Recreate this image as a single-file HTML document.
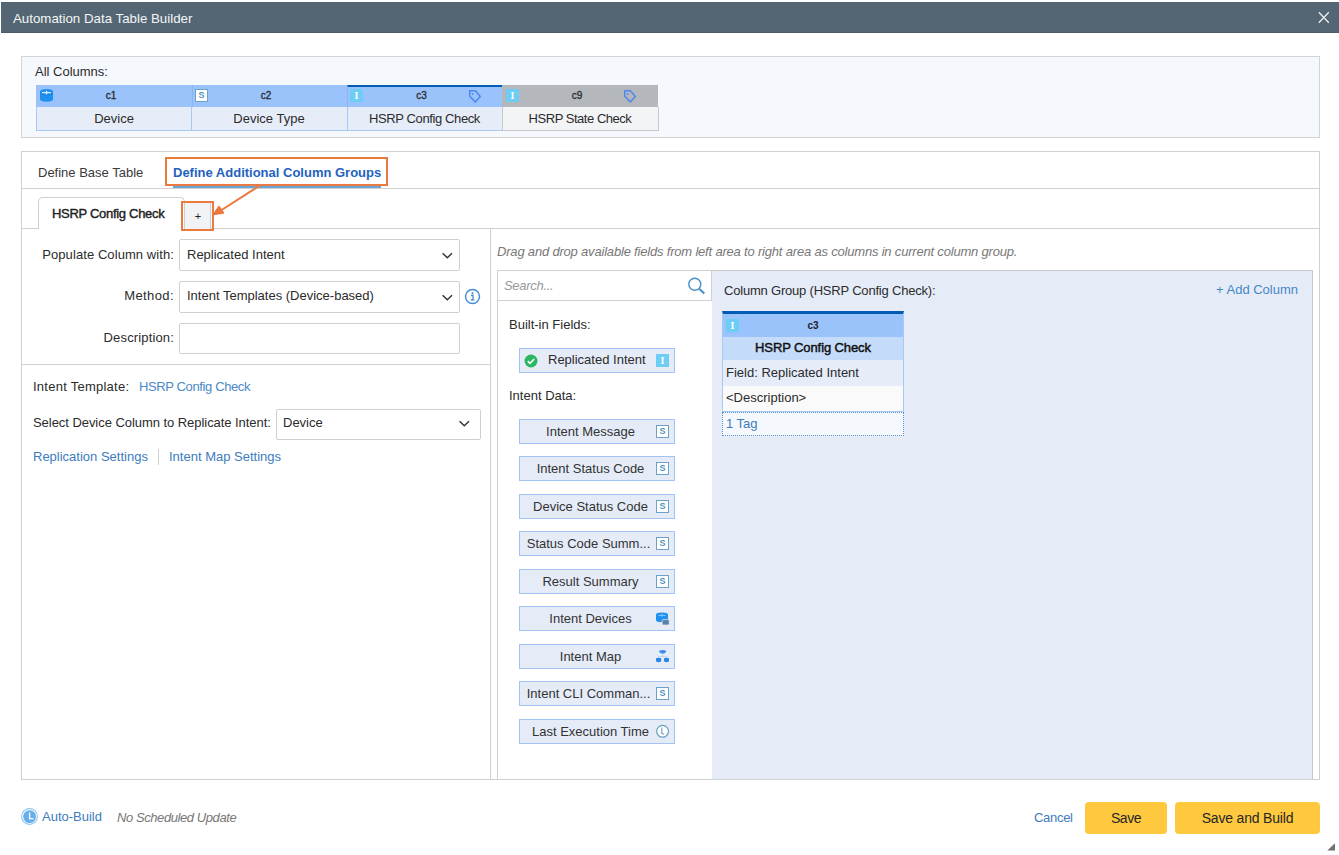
<!DOCTYPE html>
<html><head><meta charset="utf-8">
<style>
*{box-sizing:border-box;margin:0;padding:0}
html,body{width:1339px;height:855px;overflow:hidden;background:#fff}
body{position:relative;font-family:"Liberation Sans",sans-serif;font-size:13px;color:#2b2b2b}
.a{position:absolute}
.t{position:absolute;white-space:nowrap;line-height:15px}
.lnk{color:#3d7cbd}
.chip{position:absolute;left:519px;width:156px;height:25px;background:#e5ecf8;border:1px solid #a3c4f3}
.chip .tx{position:absolute;left:-1px;top:4px;width:143px;text-align:center;white-space:nowrap;line-height:15px;color:#333}
.sic{position:absolute;width:13px;height:13px;border:1px solid #6aa2c9;background:#fff;color:#5692bd;font-size:9px;font-weight:bold;line-height:11px;text-align:center}
.iic{position:absolute;width:13px;height:13px;background:#6dcdf5;color:#fff;font-family:"Liberation Serif",serif;font-size:10px;font-weight:bold;line-height:13px;text-align:center}
</style></head><body>

<!-- header -->
<div class="a" style="left:1px;top:2px;width:1338px;height:31px;background:#546673;border-bottom:1px solid #4b5b67"></div>
<div class="t" style="left:13px;top:11px;color:#f4f6f7;font-size:13.3px">Automation Data Table Builder</div>
<svg class="a" style="left:1317px;top:11px" width="14" height="14" viewBox="0 0 14 14"><path d="M1.8 1.2L11.8 11.8M11.8 1.2L1.8 11.8" stroke="#eef1f3" stroke-width="1.25"/></svg>

<!-- all columns panel -->
<div class="a" style="left:21px;top:56px;width:1299px;height:82px;background:#f5f8fc;border:1px solid #d4d4d4"></div>
<div class="t" style="left:35px;top:64px">All Columns:</div>


<!-- column table -->
<div class="a" style="left:36px;top:85px;width:156px;height:22px;background:#9ac2fb"></div>
<div class="a" style="left:192px;top:85px;width:155px;height:22px;background:#9ac2fb;border-left:1px solid #8cb6f0"></div>
<div class="a" style="left:347px;top:85px;width:155px;height:22px;background:#9ac2fb;border-left:1px solid #8cb6f0;border-top:2px solid #005bb5"></div>
<div class="a" style="left:502px;top:85px;width:156px;height:22px;background:#b4b8bc"></div>
<div class="a" style="left:36px;top:107px;width:467px;height:24px;background:#e6edf9;border:1px solid #a8c9f5;border-top:none"></div>
<div class="a" style="left:191px;top:107px;width:1px;height:23px;background:#a8c9f5"></div>
<div class="a" style="left:347px;top:107px;width:1px;height:23px;background:#a8c9f5"></div>
<div class="a" style="left:502px;top:107px;width:157px;height:24px;background:#f3f4f6;border:1px solid #c6c8ca;border-top:none"></div>
<div class="t" style="left:33px;top:88px;width:156px;text-align:center;font-size:10px;color:#2a2a2a;-webkit-text-stroke:0.3px #2a2a2a">c1</div>
<div class="t" style="left:188px;top:88px;width:156px;text-align:center;font-size:10px;color:#2a2a2a;-webkit-text-stroke:0.3px #2a2a2a">c2</div>
<div class="t" style="left:344px;top:88px;width:155px;text-align:center;font-size:10px;color:#2a2a2a;-webkit-text-stroke:0.3px #2a2a2a">c3</div>
<div class="t" style="left:499px;top:88px;width:156px;text-align:center;font-size:10px;color:#2a2a2a;-webkit-text-stroke:0.3px #2a2a2a">c9</div>
<div class="t" style="left:36px;top:111px;width:156px;text-align:center">Device</div>
<div class="t" style="left:191px;top:111px;width:156px;text-align:center">Device Type</div>
<div class="t" style="left:347px;top:111px;width:155px;text-align:center;letter-spacing:-0.39px">HSRP Config Check</div>
<div class="t" style="left:502px;top:111px;width:156px;text-align:center;letter-spacing:-0.47px">HSRP State Check</div>
<!-- icons -->
<svg class="a" style="left:39px;top:88px" width="15" height="15" viewBox="0 0 15 15"><path d="M1 3.5Q1 1 7.5 1Q14 1 14 3.5V11Q14 13.8 7.5 13.8Q1 13.8 1 11Z" fill="#1f8ff0"/><path d="M1.3 5.8Q7.5 8.3 13.7 5.8" fill="none" stroke="#1a7fd8" stroke-width="0.8"/><path d="M3 4.6H12M7.5 2.8V6.5" stroke="#d8ecfc" stroke-width="1.3"/></svg>
<div class="sic" style="left:195px;top:89px">S</div>
<div class="iic" style="left:350px;top:89px">I</div>
<div class="iic" style="left:506px;top:89px">I</div>
<svg class="a" style="left:468px;top:89px" width="14" height="14" viewBox="0 0 14 14"><path d="M1.7 1.7H7.3L12.3 7.5L7.3 12.9L1.7 7.3Z" fill="none" stroke="#4f86f0" stroke-width="1.5" stroke-linejoin="round"/><circle cx="4.6" cy="5" r="0.9" fill="#4f86f0"/></svg>
<svg class="a" style="left:623px;top:89px" width="14" height="14" viewBox="0 0 14 14"><path d="M1.7 1.7H7.3L12.3 7.5L7.3 12.9L1.7 7.3Z" fill="none" stroke="#4f86f0" stroke-width="1.5" stroke-linejoin="round"/><circle cx="4.6" cy="5" r="0.9" fill="#4f86f0"/></svg>


<!-- main panel -->
<div class="a" style="left:21px;top:151px;width:1299px;height:629px;border:1px solid #d0d0d0"></div>
<div class="a" style="left:21px;top:188px;width:1299px;height:1px;background:#d0d0d0"></div>
<div class="t" style="left:38px;top:165px;color:#3a3a3a">Define Base Table</div>
<div class="t" style="left:173px;top:165px;color:#1f62bf;font-weight:bold">Define Additional Column Groups</div>


<div class="a" style="left:173px;top:186px;width:208px;height:2px;background:#66a6da"></div>
<div class="a" style="left:165px;top:157px;width:223px;height:29px;border:2px solid #ea7a3f"></div>

<!-- inner tabs -->
<div class="a" style="left:21px;top:228px;width:1299px;height:1px;background:#d0d0d0"></div>
<div class="a" style="left:38px;top:197px;width:147px;height:32px;background:#fff;border:1px solid #cfcfcf;border-bottom:none;border-radius:5px 5px 0 0"></div>
<div class="t" style="left:52px;top:206px;color:#222;-webkit-text-stroke:0.4px #222;letter-spacing:-0.3px">HSRP Config Check</div>
<div class="a" style="left:184px;top:201px;width:27px;height:28px;background:#f2f3f4;border:1px solid #cfcfcf;border-bottom:none"></div>
<div class="t" style="left:184px;top:209px;width:28px;text-align:center;font-size:11px;color:#222">+</div>
<div class="a" style="left:181px;top:201px;width:33px;height:30px;border:2px solid #ea7a3f"></div>
<svg class="a" style="left:200px;top:180px" width="70" height="45" viewBox="0 0 70 45"><path d="M61.5 4.5L20 31" stroke="#ea7a3f" stroke-width="2"/><path d="M13.5 34.5L19 26.5L23.5 33z" fill="#ea7a3f" stroke="#ea7a3f" stroke-width="1.5" stroke-linejoin="round"/></svg>

<!-- left form pane -->
<div class="a" style="left:490px;top:228px;width:1px;height:551px;background:#d0d0d0"></div>
<div class="a" style="left:21px;top:364px;width:470px;height:1px;background:#d0d0d0"></div>
<div class="t" style="left:21px;top:247px;width:153px;text-align:right;letter-spacing:0.08px">Populate Column with:</div>
<div class="t" style="left:21px;top:288px;width:153px;text-align:right;letter-spacing:0.4px">Method:</div>
<div class="t" style="left:21px;top:330px;width:153px;text-align:right;letter-spacing:0.15px">Description:</div>
<div class="a" style="left:179px;top:239px;width:281px;height:32px;border:1px solid #cfcfcf;background:#fff;border-radius:2px"></div>
<div class="a" style="left:179px;top:281px;width:281px;height:32px;border:1px solid #cfcfcf;background:#fff;border-radius:2px"></div>
<div class="a" style="left:179px;top:323px;width:281px;height:31px;border:1px solid #cfcfcf;background:#fff;border-radius:2px"></div>
<div class="t" style="left:187px;top:247px">Replicated Intent</div>
<div class="t" style="left:187px;top:288px">Intent Templates (Device-based)</div>
<svg class="a" style="left:441px;top:251px" width="13" height="9" viewBox="0 0 13 9"><path d="M1.6 2.2L6.3 6.8L11 2.2" fill="none" stroke="#333" stroke-width="1.45"/></svg>
<svg class="a" style="left:441px;top:293px" width="13" height="9" viewBox="0 0 13 9"><path d="M1.6 2.2L6.3 6.8L11 2.2" fill="none" stroke="#333" stroke-width="1.45"/></svg>
<svg class="a" style="left:464px;top:288px" width="17" height="17" viewBox="0 0 17 17"><circle cx="8.5" cy="8.5" r="7" fill="none" stroke="#3d8ad6" stroke-width="1.4"/><circle cx="8.5" cy="5.2" r="1" fill="#3d8ad6"/><path d="M7 7.3h2v4.5M6.6 11.8h3.8" fill="none" stroke="#3d8ad6" stroke-width="1.3"/></svg>

<div class="t" style="left:33px;top:379px;letter-spacing:0.25px">Intent Template:</div>
<div class="t lnk" style="left:139px;top:379px;letter-spacing:-0.38px;color:#4a88c6">HSRP Config Check</div>
<div class="t" style="left:33px;top:415px;letter-spacing:-0.05px">Select Device Column to Replicate Intent:</div>
<div class="a" style="left:276px;top:409px;width:205px;height:31px;border:1px solid #cfcfcf;background:#fff;border-radius:2px"></div>
<div class="t" style="left:283px;top:415px">Device</div>
<svg class="a" style="left:458px;top:419px" width="13" height="9" viewBox="0 0 13 9"><path d="M1.6 2.2L6.3 6.8L11 2.2" fill="none" stroke="#333" stroke-width="1.45"/></svg>
<div class="t lnk" style="left:33px;top:449px">Replication Settings</div>
<div class="a" style="left:158px;top:449px;width:1px;height:16px;background:#d0d0d0"></div>
<div class="t lnk" style="left:169px;top:449px">Intent Map Settings</div>

<!-- right area -->
<div class="t" style="left:497px;top:244px;font-style:italic;color:#777;letter-spacing:-0.19px">Drag and drop available fields from left area to right area as columns in current column group.</div>
<div class="a" style="left:497px;top:270px;width:1px;height:509px;background:#d0d0d0"></div>
<div class="a" style="left:497px;top:270px;width:215px;height:31px;border-top:1px solid #d0d0d0;border-bottom:1px solid #d0d0d0;border-right:1px solid #d0d0d0"></div>
<div class="t" style="left:504px;top:278px;font-style:italic;color:#999;letter-spacing:-0.3px">Search...</div>
<svg class="a" style="left:687px;top:276px" width="19" height="19" viewBox="0 0 19 19"><circle cx="7.8" cy="8.3" r="6" fill="none" stroke="#4a90c8" stroke-width="1.4"/><path d="M12.2 12.7L17.3 17.6" stroke="#4a90c8" stroke-width="2.1"/></svg>
<div class="t" style="left:509px;top:317px">Built-in Fields:</div>
<div class="t" style="left:509px;top:388px">Intent Data:</div>

<div class="a" style="left:712px;top:270px;width:601px;height:509px;background:#e5ecf8;border-top:1px solid #c8c8c8;border-right:1px solid #c8c8c8"></div>
<div class="t" style="left:724px;top:283px;letter-spacing:-0.2px">Column Group (HSRP Config Check):</div>
<div class="t lnk" style="left:1216px;top:282px;color:#4787c6">+ Add Column</div>

<div class="chip" style="top:348px"></div>
<svg class="a" style="left:524px;top:354px" width="14" height="14" viewBox="0 0 14 14"><circle cx="7" cy="7" r="6.5" fill="#2cb562"/><path d="M3.8 7.2L6 9.3L10.2 5" fill="none" stroke="#fff" stroke-width="1.6"/></svg>
<div class="t" style="left:548px;top:352px">Replicated Intent</div>
<div class="iic" style="left:656px;top:354px">I</div>
<div class="chip" style="top:419px"><div class="tx">Intent Message</div></div>
<div class="sic" style="left:656px;top:425px">S</div>
<div class="chip" style="top:456px"><div class="tx">Intent Status Code</div></div>
<div class="sic" style="left:656px;top:462px">S</div>
<div class="chip" style="top:494px"><div class="tx">Device Status Code</div></div>
<div class="sic" style="left:656px;top:500px">S</div>
<div class="chip" style="top:531px"><div class="tx" style="left:-3px">Status Code Summ...</div></div>
<div class="sic" style="left:656px;top:537px">S</div>
<div class="chip" style="top:569px"><div class="tx">Result Summary</div></div>
<div class="sic" style="left:656px;top:575px">S</div>
<div class="chip" style="top:606px"><div class="tx">Intent Devices</div></div>
<svg class="a" style="left:655px;top:611px" width="15" height="15" viewBox="0 0 15 15"><path d="M1 3.6Q1 1.6 7 1.6Q13 1.6 13 3.6V9Q13 11.2 7 11.2Q1 11.2 1 9Z" fill="#1f8ff0"/><path d="M3.5 4.4H10.5M7 3V5.8" stroke="#8cc8f6" stroke-width="1"/><rect x="7.2" y="8.6" width="7" height="5.4" rx="1" fill="#5a7fa8" stroke="#e5ecf8" stroke-width="0.7"/></svg>
<div class="chip" style="top:644px"><div class="tx">Intent Map</div></div>
<svg class="a" style="left:655px;top:649px" width="15" height="15" viewBox="0 0 15 15"><path d="M7.6 5V7.5M3.6 9V7.5H11.6V9" fill="none" stroke="#b5d0f0" stroke-width="0.8"/><path d="M4.3 1.8Q7.65 0.3 11 1.8V3.3Q7.65 6 4.3 3.3Z" fill="#3d8fe8"/><path d="M1 9.2Q3.6 8.4 6.2 9.2V12.3Q3.6 14.3 1 12.3Z" fill="#2a86e8"/><path d="M9 9.2Q11.5 8.4 14 9.2V12.3Q11.5 14.3 9 12.3Z" fill="#2a86e8"/></svg>
<div class="chip" style="top:681px"><div class="tx" style="left:-3px">Intent CLI Comman...</div></div>
<div class="sic" style="left:656px;top:687px">S</div>
<div class="chip" style="top:719px"><div class="tx">Last Execution Time</div></div>
<svg class="a" style="left:655px;top:724px" width="15" height="15" viewBox="0 0 15 15"><circle cx="7.6" cy="7.3" r="5.9" fill="#fff" stroke="#6a9ec6" stroke-width="1.2"/><path d="M6.8 3.6V9.3L9 10.3" fill="none" stroke="#6a9ec6" stroke-width="1.1"/></svg>

<div class="a" style="left:722px;top:311px;width:182px;height:101px;border:1px solid #a8c9f5;border-top:3px solid #005bb5;background:#fafafa"></div>
<div class="a" style="left:723px;top:314px;width:180px;height:23px;background:#9ac2fb"></div>
<div class="a" style="left:723px;top:337px;width:180px;height:23px;background:#c5dbfa"></div>
<div class="a" style="left:723px;top:360px;width:180px;height:26px;background:#e6edf9"></div>
<div class="iic" style="left:726px;top:319px">I</div>
<div class="t" style="left:722px;top:318px;width:182px;text-align:center;font-size:10px;font-weight:bold;color:#222">c3</div>
<div class="t" style="left:722px;top:340px;width:182px;text-align:center;color:#111;-webkit-text-stroke:0.45px #111;letter-spacing:-0.1px">HSRP Config Check</div>
<div class="t" style="left:726px;top:365px">Field: Replicated Intent</div>
<div class="t" style="left:726px;top:390px">&lt;Description&gt;</div>
<div class="a" style="left:722px;top:412px;width:182px;height:24px;border:1px dotted #5b8fd0;background:#f5f9fe"></div>
<div class="t lnk" style="left:726px;top:416px">1 Tag</div>


<!-- footer -->
<svg class="a" style="left:21px;top:808px" width="18" height="18" viewBox="0 0 18 18"><circle cx="8.5" cy="8.5" r="7.9" fill="none" stroke="#92c6f0" stroke-width="1.1"/><circle cx="8.6" cy="8.6" r="6.4" fill="#68aeea"/><path d="M8.6 4.5V10.6H12.5" fill="none" stroke="#fff" stroke-width="1.3"/></svg>
<div class="t lnk" style="left:42px;top:809px">Auto-Build</div>
<div class="t" style="left:117px;top:810px;font-style:italic;color:#777;letter-spacing:-0.42px">No Scheduled Update</div>
<div class="t lnk" style="left:1034px;top:810px;letter-spacing:-0.3px">Cancel</div>
<div class="a" style="left:1085px;top:802px;width:82px;height:32px;background:#fec93e;border-radius:4px"></div>
<div class="t" style="left:1085px;top:811px;width:82px;text-align:center;color:#262626;font-size:14px;letter-spacing:-0.5px">Save</div>
<div class="a" style="left:1175px;top:802px;width:145px;height:32px;background:#fec93e;border-radius:4px"></div>
<div class="t" style="left:1175px;top:811px;width:145px;text-align:center;color:#262626;font-size:14px;letter-spacing:-0.18px">Save and Build</div>
<svg class="a" style="left:1326px;top:842px" width="10" height="10" viewBox="0 0 10 10"><path d="M1.3 8.6L9 1.2V8.6Z" fill="#707070"/></svg>

</body></html>
